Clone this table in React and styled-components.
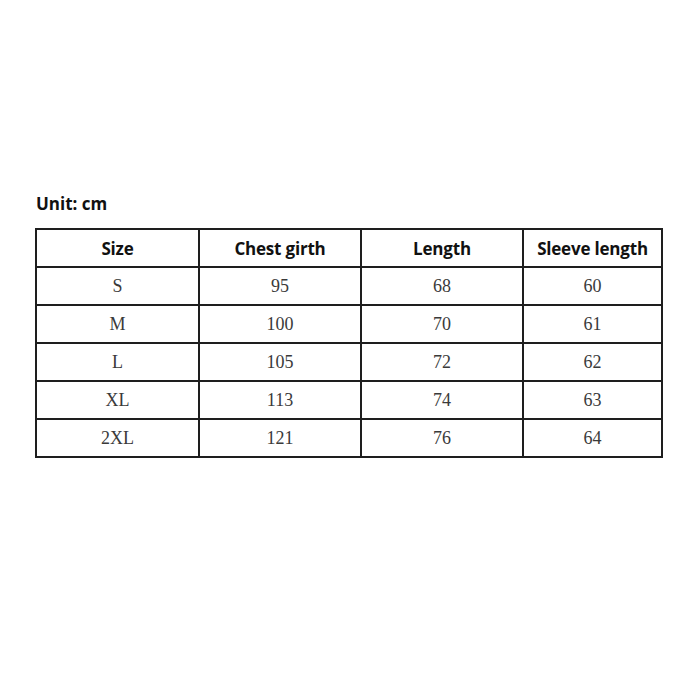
import React from 'react';
import styled, { createGlobalStyle } from 'styled-components';

const GlobalStyle = createGlobalStyle`
  html, body {
    margin: 0;
    padding: 0;
    background: #fff;
  }
`;

const Page = styled.div`
  width: 700px;
  height: 700px;
  box-sizing: border-box;
  padding: 192px 0 0 35px;
  background: #fff;
`;

const Unit = styled.div`
  font-family: 'Open Sans', 'Liberation Sans', sans-serif;
  font-weight: 700;
  font-size: 17px;
  color: #111;
  line-height: 24px;
  margin: 0 0 12px 1px;
`;

const SizeTable = styled.table`
  border-collapse: collapse;
  table-layout: fixed;
  width: 626px;
`;

const HeadCell = styled.th`
  border: 2px solid #1e1e1e;
  height: 36px;
  padding: 0;
  text-align: center;
  font-family: 'Open Sans', 'Liberation Sans', sans-serif;
  font-weight: 700;
  font-size: 17px;
  letter-spacing: -0.2px;
  color: #111;
`;

const Cell = styled.td`
  border: 2px solid #1e1e1e;
  height: 36px;
  padding: 0;
  text-align: center;
  font-family: 'Liberation Serif', 'DejaVu Serif', serif;
  font-size: 18px;
  color: #3a3a3a;
`;

const columns = [
  { label: 'Size', width: 163 },
  { label: 'Chest girth', width: 162 },
  { label: 'Length', width: 162 },
  { label: 'Sleeve length', width: 139 },
];

const rows = [
  ['S', '95', '68', '60'],
  ['M', '100', '70', '61'],
  ['L', '105', '72', '62'],
  ['XL', '113', '74', '63'],
  ['2XL', '121', '76', '64'],
];

const App = () => (
  <Page>
    <GlobalStyle />
    <Unit>Unit: cm</Unit>
    <SizeTable>
      <colgroup>
        {columns.map((c) => (
          <col key={c.label} style={{ width: c.width }} />
        ))}
      </colgroup>
      <thead>
        <tr>
          {columns.map((c) => (
            <HeadCell key={c.label}>{c.label}</HeadCell>
          ))}
        </tr>
      </thead>
      <tbody>
        {rows.map((row) => (
          <tr key={row[0]}>
            {row.map((v, i) => (
              <Cell key={i}>{v}</Cell>
            ))}
          </tr>
        ))}
      </tbody>
    </SizeTable>
  </Page>
);

export default App;
